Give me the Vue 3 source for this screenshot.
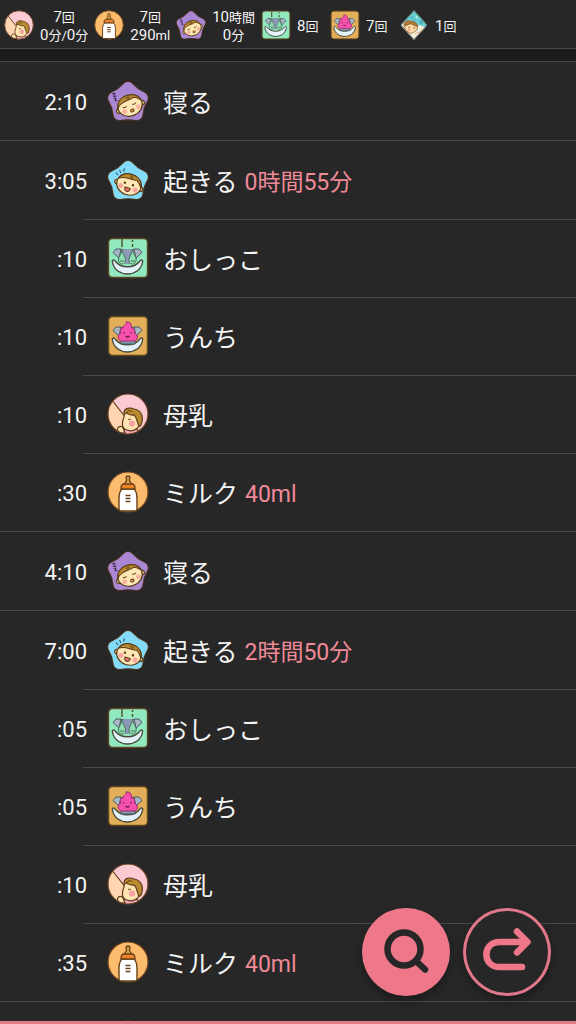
<script setup>
const stats = [
  { icon: 'breast', label: '母乳', lines: [[['7', '回']], [['0', '分/'], ['0', '分']]] },
  { icon: 'milk', label: 'ミルク', lines: [[['7', '回']], [['290', 'ml']]] },
  { icon: 'sleep', label: '寝る', lines: [[['10', '時間']], [['0', '分']]] },
  { icon: 'pee', label: 'おしっこ', lines: [[['8', '回']]] },
  { icon: 'poo', label: 'うんち', lines: [[['7', '回']]] },
  { icon: 'bath', label: 'お風呂', lines: [[['1', '回']]] },
];

// one group per hour, only the first entry shows the full time
const hours = [
  [
    { time: '2:10', icon: 'sleep', name: '寝る' },
  ],
  [
    { time: '3:05', icon: 'wake', name: '起きる', value: '0時間55分' },
    { time: ':10', icon: 'pee', name: 'おしっこ' },
    { time: ':10', icon: 'poo', name: 'うんち' },
    { time: ':10', icon: 'breast', name: '母乳' },
    { time: ':30', icon: 'milk', name: 'ミルク', value: '40ml' },
  ],
  [
    { time: '4:10', icon: 'sleep', name: '寝る' },
  ],
  [
    { time: '7:00', icon: 'wake', name: '起きる', value: '2時間50分' },
    { time: ':05', icon: 'pee', name: 'おしっこ' },
    { time: ':05', icon: 'poo', name: 'うんち' },
    { time: ':10', icon: 'breast', name: '母乳' },
    { time: ':35', icon: 'milk', name: 'ミルク', value: '40ml' },
  ],
  [
    { time: '', icon: 'milk', name: '' },
  ],
];
</script>

<template>
  <div class="app">
    <svg class="sprite" aria-hidden="true">
      <symbol id="star" viewBox="0 0 42 42">
        <path d="M21 7.500L27.500 13.600L35.300 17.900L31.500 26L29.800 34.600L21 33.500L12.200 34.600L10.500 26L6.700 17.900L14.500 13.600Z" stroke="#51331d" stroke-width="13" stroke-linejoin="round" />
        <path d="M21 7.500L27.500 13.600L35.300 17.900L31.500 26L29.800 34.600L21 33.500L12.200 34.600L10.500 26L6.700 17.900L14.500 13.600Z" fill="currentColor" stroke="currentColor" stroke-width="11" stroke-linejoin="round" />
      </symbol>

      <symbol id="sleep" viewBox="0 0 42 42">
        <use href="#star" color="#a987d3" />
        <path d="M5 14l3-1-1.500 3.500 3-.5M6.500 18.500l2.500-.5-1 3 2.500-.5" fill="none" stroke="#3d2549" stroke-width="1" />
        <g transform="rotate(-20 23 25.500)" stroke="#593c18" stroke-width="1.200">
          <circle cx="10.500" cy="27" r="2.200" fill="#fbdca6" />
          <circle cx="35.500" cy="27" r="2.200" fill="#fbdca6" />
          <ellipse cx="23" cy="25.500" rx="12.500" ry="10.500" fill="#ffe7b5" />
          <path d="M10.700 24C11.500 18.500 16.500 15 23 15C29.500 15 34.500 18.500 35.300 24C33.500 22 32 20 29 19C25 21 16 17.500 10.700 24Z" fill="#b98a30" stroke-width="1" />
          <path d="M21.500 17.500c1-1.500 4-1 3.500 .5s-3.500 .5-2-.5" fill="none" stroke-width=".8" />
          <path d="M15.500 25q2 1.500 4 0M25.500 25q2 1.500 4 0" fill="none" stroke-width="1" />
          <circle cx="16" cy="29.500" r="2.400" fill="#f9b3a1" stroke="none" />
          <circle cx="30.500" cy="29.500" r="2.400" fill="#f9b3a1" stroke="none" />
          <ellipse cx="23.500" cy="31" rx="1.800" ry="1.400" fill="#f2a13d" stroke-width="1" />
        </g>
      </symbol>

      <symbol id="wake" viewBox="0 0 42 42">
        <use href="#star" color="#85dcf8" />
        <path d="M9 13.500l2 2.500M12.500 11l1.500 3M17.500 9.500l-1 3" fill="none" stroke="#27566b" stroke-width="1.100" />
        <g transform="rotate(18 22 25.500)" stroke="#593c18" stroke-width="1.200">
          <circle cx="9.500" cy="26.500" r="2.200" fill="#fbdca6" />
          <circle cx="34.500" cy="26.500" r="2.200" fill="#fbdca6" />
          <ellipse cx="22" cy="25.500" rx="12.500" ry="10.500" fill="#ffe7b5" />
          <path d="M10 23C11.500 18 16 15 22 15C28.500 15 33.500 18.500 34.300 25C32.500 23 31 20.500 28 19C23 21.500 15 17.500 10 23Z" fill="#b98a30" stroke-width="1" />
          <path d="M20.500 17.500c1-1.500 4-1 3.500 .5s-3.500 .5-2-.5" fill="none" stroke-width=".8" />
          <circle cx="17.500" cy="25" r=".6" fill="#593c18" />
          <circle cx="26" cy="25" r=".6" fill="#593c18" />
          <circle cx="14.500" cy="29" r="2.500" fill="#f9a6a1" stroke="none" />
          <circle cx="29.500" cy="29" r="2.500" fill="#f9a6a1" stroke="none" />
          <path d="M19 29h5.500c0 5-5.500 5-5.500 0Z" fill="#ef706d" stroke-width="1" />
        </g>
      </symbol>

      <symbol id="toilet" viewBox="0 0 42 42">
        <path d="M10 12.500H31L29 22H12Z" fill="#96a7b8" stroke="#4c5963" />
        <path d="M6 15.500l3-3.500h5l-2 9ZM35 15.500l-3-3.500h-5l2 9Z" fill="#a8b7c4" stroke="#4c5963" />
        <path d="M5.500 25C4.500 23 7 22 8.500 24.500C14 31.500 27 31.500 32.500 24.500C34 22 36.500 23 35.500 25C33 41 8 41 5.500 25Z" fill="#e4f3fb" stroke="#4a4a3a" stroke-width="1.400" />
      </symbol>

      <symbol id="pee" viewBox="0 0 42 42">
        <rect x="1.500" y="1.500" width="39" height="39" rx="4" fill="#91eabf" stroke="#5c4520" stroke-width="1.400" />
        <use href="#toilet" />
        <path d="M16 12h9l-2 15h-5Z" fill="#8c98b5" />
        <path d="M15 2v8M25.500 3v2M25.500 7v3" fill="none" stroke="#4d5b28" stroke-width="1.500" />
        <g fill="#8fdfb5" stroke="#49745d">
          <path d="M15 13C16 18 19 20 18.500 24C18 28 12 28 11.500 24C11 20 14 18 15 13Z" />
          <path d="M25.500 13C26.500 18 30 20 29 24C28.500 28 22.500 28 22 24C21.500 20 24.500 18 25.500 13Z" />
          <path d="M13 23.500q2 2 4 0M24 23.500q2 2 4 0" fill="none" />
        </g>
      </symbol>

      <symbol id="poo" viewBox="0 0 42 42">
        <rect x="1.500" y="1.500" width="39" height="39" rx="4" fill="#e3ae59" stroke="#5c4520" stroke-width="1.400" />
        <use href="#toilet" />
        <path d="M14 25h14v4H14Z" fill="#829bac" stroke="#4c5963" />
        <path d="M19 7C24 6 25 11 24.500 13C28 13 28 17 27 18C32 19 31 26 27 26H15C10 26 10 19 14 18C12 15 14 13 16 13C16 9 21 10 19 7Z" fill="#f651ad" stroke="#9d2b70" />
        <path d="M17 17v1.500M24 17v1.500M18.500 21q2 2 4 0" fill="none" stroke="#7b1e55" stroke-width="1.300" />
      </symbol>

      <symbol id="breast" viewBox="0 0 42 42">
        <clipPath id="breast-clip"><circle cx="21" cy="21" r="20" /></clipPath>
        <circle cx="21" cy="21" r="20" fill="#fbcad2" />
        <g clip-path="url(#breast-clip)" stroke="#593c18" stroke-width="1.200">
          <path d="M0 5L7 9.500L18 23C20 29 15 33 13 42H0Z" fill="#ffd5b3" stroke="none" />
          <path d="M6 8.500L19 25" fill="none" />
          <path d="M17 36C22 32 31 34 34 42H16Z" fill="#f9acc0" />
          <path d="M17 24C14 30 15 36 20 37C27 40 34 34 34 27C34 20 29 16 24 17C19 18 17 20 17 24Z" fill="#ffe3b2" />
          <path d="M17 20C17 15 23 14 27 16C35 17 37 25 34 32C32 34 31 33 31 30C29 27 30 24 27 22C24 23 21 20 17 20Z" fill="#b98a30" />
          <path d="M20 20c0-3 5-3 5-1M21 26q1.500 1.500 3 0" fill="none" stroke-width="1" />
          <circle cx="25" cy="30.500" r="3" fill="#f8a0a4" stroke="none" />
          <path d="M11 38C9 34 14 32 16 35L18 40H11Z" fill="#ffe3b2" />
        </g>
        <circle cx="21" cy="21" r="20" fill="none" stroke="#6b4221" stroke-width="1.200" />
      </symbol>

      <symbol id="milk" viewBox="0 0 42 42">
        <circle cx="21" cy="21" r="20" fill="#fcbb6d" stroke="#71451c" stroke-width="1.200" />
        <g stroke="#68421a" stroke-width="1.400">
          <path d="M17 14C18 11 20 11 19.500 8C17 4 25 4 22.500 8C22 11 24 11 25 14Z" fill="#d8a44d" />
          <path d="M15 18h12c3 3 3 6 3 9v11c0 2-1 2-2 2H14c-1 0-2 0-2-2V27c0-3 0-6 3-9Z" fill="#fff" />
          <path d="M14 18c0-4 1-5 3-5h8c2 0 3 1 3 5Z" fill="#eb8426" />
          <path d="M18.500 24.500h5M18.500 27.500h5M18.500 30.500h5" fill="none" />
        </g>
      </symbol>

      <symbol id="bath" viewBox="0 0 42 42">
        <clipPath id="bath-clip"><path d="M21 0L40 21L21 42L2 21Z" /></clipPath>
        <g clip-path="url(#bath-clip)">
          <path d="M0 0h42v42H0Z" fill="#67ced3" />
          <path d="M5 18C12 12 24 15 27 21L38 24L21 42L2 24Z" fill="#f4f0df" />
          <ellipse cx="17" cy="24" rx="9" ry="8" fill="#ffdca8" stroke="#765129" />
          <path d="M7 22C6 15 14 14 19 16C24 17 26 20 26 23C20 22 17 18 14 20C12 22 9 21 7 22Z" fill="#b17b3b" stroke="#765129" />
          <path d="M13 24q1.500 1.500 3 0M20 25q1.500 1.500 3 0" fill="none" stroke="#593c18" />
          <circle cx="14" cy="28" r="1.800" fill="#f7a48e" />
          <path d="M11 33q3-4 6 0q3-4 6 0q3-4 6-1q1-5 6-4" fill="#fff" stroke="#d09a58" />
          <circle cx="25" cy="10" r="1.600" fill="#b5f3f4" />
          <circle cx="31" cy="17" r="2" fill="none" stroke="#2e8f9c" />
          <path d="M18 9v4M22 13v2" stroke="#2e8f9c" />
        </g>
        <path d="M21 1L39 21L21 41L3 21Z" fill="none" stroke="#60513a" />
      </symbol>
    </svg>

    <header class="summary">
      <ul class="stats">
        <li v-for="s in stats" :key="s.icon" class="stat">
          <svg class="stat-icon" role="img" :aria-label="s.label"><use :href="'#' + s.icon" /></svg>
          <div class="stat-text" :class="{ single: s.lines.length === 1 }">
            <div v-for="(line, i) in s.lines" :key="i">
              <template v-for="(part, j) in line" :key="j">{{ part[0] }}<span class="unit">{{ part[1] }}</span></template>
            </div>
          </div>
        </li>
      </ul>
    </header>

    <main class="log">
      <ul v-for="(entries, h) in hours" :key="h" class="hour">
        <li v-for="(e, i) in entries" :key="i" class="entry">
          <time class="time">{{ e.time }}</time>
          <svg class="icon" aria-hidden="true"><use :href="'#' + e.icon" /></svg>
          <span class="name">{{ e.name }}</span>
          <span v-if="e.value" class="value">{{ e.value }}</span>
        </li>
      </ul>
    </main>

    <div class="actions">
      <button type="button" class="fab fab-search" aria-label="検索">
        <svg viewBox="0 0 88 88" fill="none" stroke="#272727" stroke-linecap="round">
          <circle cx="42" cy="41" r="16.500" stroke-width="6.500" />
          <path d="M54 53L63 61.500" stroke-width="6.500" />
        </svg>
      </button>
      <button type="button" class="fab fab-next" aria-label="進む">
        <svg viewBox="0 0 88 88" fill="none" stroke="#ee788a" stroke-width="6.500" stroke-linecap="round" stroke-linejoin="round">
          <path d="M59 59H36.500C19 59 19 34 36.500 34H63M54 23.500L64.500 34L54 44.500" />
        </svg>
      </button>
    </div>

    <footer class="bottom-edge"></footer>
  </div>
</template>

<style>
body { background: #272727; }
</style>

<style scoped>
.app {
  position: relative;
  display: flex;
  flex-direction: column;
  height: 100vh;
  overflow: hidden;
  background: #272727;
  color: #f4f4f4;
  font-family: Roboto, "Noto Sans CJK JP", sans-serif;
}
ul { list-style: none; margin: 0; padding: 0; }
.sprite { position: absolute; width: 0; height: 0; }

.summary { flex: none; background: #1b1b1b; padding-bottom: 12px; }
.stats { display: flex; gap: 6px; height: 46px; padding: 2px 4px 0; background: #272727; border-bottom: 1px solid #484848; }
.stat { display: flex; align-items: center; gap: 6px; }
.stat-icon { width: 30px; height: 30px; flex: none; }
.stat-text { font-size: 15px; line-height: 18px; text-align: center; white-space: nowrap; padding-top: 2px; }
.stat-text.single { min-width: 27px; text-align: left; }
.unit { font-size: 13px; line-height: 1; }

.log { flex: 1; min-height: 0; overflow: hidden; }
.hour { border-top: 1px solid #484848; }
.entry { display: flex; align-items: center; height: 78px; white-space: nowrap; }
.entry + .entry { background: linear-gradient(#484848, #484848) no-repeat right top / calc(100% - 83px) 1px; }
.time { width: 87px; padding-top: 2px; text-align: right; font-size: 22px; flex: none; }
.icon { width: 42px; height: 42px; margin: 0 14px 0 20px; flex: none; }
.name { padding-top: 6px; font-size: 25px; line-height: 36px; }
.value { margin-left: 7px; padding-top: 6px; font-size: 23px; line-height: 36px; color: #f08a98; }

.actions { position: absolute; right: 25px; bottom: 28px; display: flex; gap: 13px; }
.fab { width: 88px; height: 88px; padding: 0; border: 0; border-radius: 50%; cursor: pointer; box-shadow: 0 4px 10px rgba(0, 0, 0, 0.35); }
.fab svg { display: block; width: 100%; height: 100%; }
.fab-search { background: #ee788a; }
.fab-next { background: #272727; box-shadow: inset 0 0 0 3px #e0788a, 0 4px 10px rgba(0, 0, 0, 0.35); }

.bottom-edge { flex: none; height: 3px; background: #e07c89; }
</style>
